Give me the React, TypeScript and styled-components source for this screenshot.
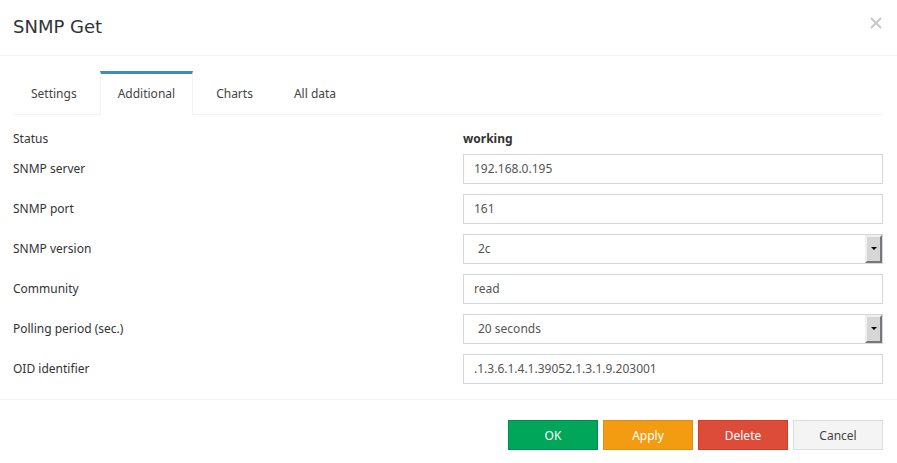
import * as React from "react";
import styled, {createGlobalStyle} from 'styled-components';

const tabs = ["Settings", "Additional", "Charts", "All data"];

const App: React.FunctionComponent = (): JSX.Element => {
    const [activeTab, setActiveTab] = React.useState("Additional");

    return (
        <>
            <GlobalStyle />
            <Dialog role="dialog" aria-labelledby="dialog-title">
                <Header>
                    <Title id="dialog-title">SNMP Get</Title>
                    <CloseButton type="button" aria-label="Close">
                        <svg width="12" height="12" viewBox="0 0 12 12" stroke="#c8c8c8" strokeWidth="2">
                            <path d="M1 1L11 11M11 1L1 11" />
                        </svg>
                    </CloseButton>
                </Header>
                <form onSubmit={(event) => event.preventDefault()}>
                    <Body>
                        <TabList role="tablist">
                            {tabs.map((tab) => (
                                <Tab
                                    key={tab}
                                    type="button"
                                    role="tab"
                                    aria-selected={tab === activeTab}
                                    $active={tab === activeTab}
                                    onClick={() => setActiveTab(tab)}
                                >
                                    {tab}
                                </Tab>
                            ))}
                        </TabList>
                        <Fields>
                            <StatusRow>
                                <span>Status</span>
                                <strong>working</strong>
                            </StatusRow>
                            <Row>
                                <Label htmlFor="server">SNMP server</Label>
                                <Input id="server" type="text" defaultValue="192.168.0.195" />
                            </Row>
                            <Row>
                                <Label htmlFor="port">SNMP port</Label>
                                <Input id="port" type="text" defaultValue="161" />
                            </Row>
                            <Row>
                                <Label htmlFor="version">SNMP version</Label>
                                <SelectBox>
                                    <Select id="version" defaultValue="2c">
                                        <option>1</option>
                                        <option>2c</option>
                                    </Select>
                                </SelectBox>
                            </Row>
                            <Row>
                                <Label htmlFor="community">Community</Label>
                                <Input id="community" type="text" defaultValue="read" />
                            </Row>
                            <Row>
                                <Label htmlFor="period">Polling period (sec.)</Label>
                                <SelectBox>
                                    <Select id="period" defaultValue="20 seconds">
                                        <option>10 seconds</option>
                                        <option>20 seconds</option>
                                    </Select>
                                </SelectBox>
                            </Row>
                            <Row>
                                <Label htmlFor="oid">OID identifier</Label>
                                <Input id="oid" type="text" defaultValue=".1.3.6.1.4.1.39052.1.3.1.9.203001" />
                            </Row>
                        </Fields>
                    </Body>
                    <Footer>
                        <Button type="submit" $bg="#00a65a" $border="#008d4c">OK</Button>
                        <Button type="button" $bg="#f39c12" $border="#e08e0b">Apply</Button>
                        <Button type="button" $bg="#dd4b39" $border="#d73925">Delete</Button>
                        <Button type="button" $bg="#f4f4f4" $border="#dddddd" $color="#444444">Cancel</Button>
                    </Footer>
                </form>
            </Dialog>
        </>
    )
};

export default App;

const GlobalStyle = createGlobalStyle`
    *, *::before, *::after {
        box-sizing: border-box;
    }
    body {
        margin: 0;
        background: #ffffff;
        color: #333333;
        font-family: "Noto Sans", "Open Sans", sans-serif;
        font-size: 12px;
        line-height: 20px;
    }
    button, input, select {
        font: inherit;
    }
`;

const Dialog = styled.div`
    background: #ffffff;
`;

const Header = styled.header`
    display: flex;
    justify-content: space-between;
    align-items: flex-start;
    padding: 15px 14px 16px 13px;
    border-bottom: 1px solid #f4f4f4;
`;

const Title = styled.h4`
    margin: 0;
    font-family: "DejaVu Sans", sans-serif;
    font-size: 18px;
    font-weight: 400;
    line-height: 24px;
`;

const CloseButton = styled.button`
    display: flex;
    padding: 2px 1px;
    border: 0;
    background: none;
    cursor: pointer;
`;

const Body = styled.div`
    padding: 15px 14px 15px 13px;
    border-bottom: 1px solid #f4f4f4;
`;

const TabList = styled.div`
    display: flex;
    gap: 5px;
    border-bottom: 1px solid #f4f4f4;
`;

const Tab = styled.button<{$active: boolean}>`
    margin-bottom: -1px;
    padding: 10px 17px 11px;
    border: 1px solid;
    border-width: 3px 1px 0;
    border-color: ${(props) => props.$active ? "#3c8dbc #f4f4f4" : "transparent"};
    background: ${(props) => props.$active ? "#ffffff" : "transparent"};
    color: #444444;
    cursor: pointer;
`;

const Fields = styled.div`
    display: flex;
    flex-direction: column;
    gap: 10px;
    padding-top: 14px;
`;

const Row = styled.div`
    display: grid;
    grid-template-columns: 1fr 1fr;
    column-gap: 30px;
    align-items: center;
`;

const StatusRow = styled(Row)`
    margin-bottom: -5px;
`;

const Label = styled.label`
    justify-self: start;
`;

const Input = styled.input`
    width: 100%;
    height: 30px;
    padding: 3px 10px 5px;
    border: 1px solid #d2d6de;
    border-radius: 0;
    background: #ffffff;
    color: #555555;
`;

const SelectBox = styled.div`
    position: relative;

    /* drop-down arrow with raised edges */
    &::before {
        content: "";
        position: absolute;
        top: 1px;
        right: 1px;
        bottom: 1px;
        width: 17px;
        border: 2px solid;
        border-color: #f0f0f0 #777777 #777777 #f0f0f0;
        background: #d6d6d6;
        pointer-events: none;
    }
    &::after {
        content: "";
        position: absolute;
        top: 13px;
        right: 6px;
        border: 3px solid transparent;
        border-top-color: #000000;
        border-bottom: 0;
        pointer-events: none;
    }
`;

const Select = styled.select`
    display: block;
    width: 100%;
    height: 30px;
    padding: 4px 30px 4px 14px;
    border: 1px solid #d2d6de;
    border-radius: 0;
    background: #ffffff;
    color: #555555;
    appearance: none;
`;

const Footer = styled.footer`
    display: flex;
    justify-content: flex-end;
    gap: 5px;
    padding: 20px 14px 13px;
`;

const Button = styled.button<{$bg: string; $border: string; $color?: string}>`
    width: 90px;
    padding: 5px 12px 3px;
    border: 1px solid ${(props) => props.$border};
    background: ${(props) => props.$bg};
    color: ${(props) => props.$color || "#ffffff"};
    cursor: pointer;
`;
